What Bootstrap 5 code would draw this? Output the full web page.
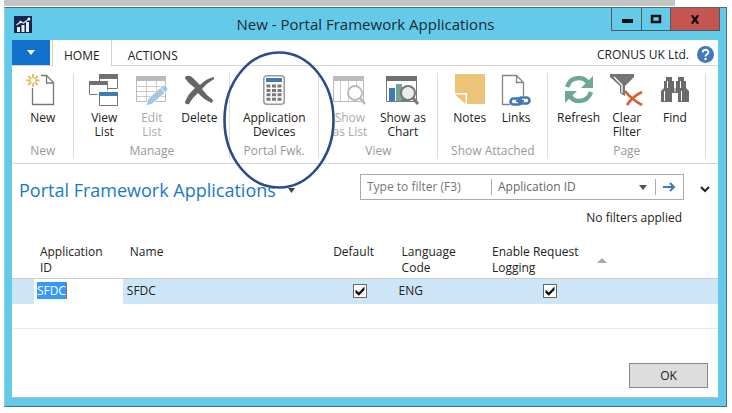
<!DOCTYPE html>
<html lang="en">
<head>
<meta charset="utf-8">
<meta name="viewport" content="width=device-width, initial-scale=1">
<title>New - Portal Framework Applications</title>
<link href="https://cdn.jsdelivr.net/npm/bootstrap@5.3.0/dist/css/bootstrap.min.css" rel="stylesheet">
<style>
body{font-family:"Open Sans","Noto Sans",sans-serif;font-size:12px;line-height:16px;color:#222;background:#fff}
svg{display:block}
.page{min-height:100vh;padding:0 5px 6px 4px}
.backdrop{height:6px;background:#c4c4c4;margin-right:52px}
.window{background:#64caea;border:1px solid #4d6f7d;border-left-color:#8fcfe4;margin-top:1px;padding:0 8px 8px 7px}
.titlebar{height:32px;margin-right:-2px}
.titlebar h1{font-size:15px;line-height:32px;color:#1c2b33;padding-left:88px}
.captions{height:23px;border:1px solid #4d5a60;border-top:0}
.captions button{border:0;border-radius:0;padding:0;width:29px;background:transparent;display:flex;align-items:center;justify-content:center}
.captions button+button{border-left:1px solid #4d5a60}
.captions .close-win{width:49px;background:#c4564f}
.client{background:#fff;border-bottom:1px solid #a9bfc9}
.tabs{height:26px;border-bottom:1px solid #d4d4d4}
.filemenu{width:38px;border:0;border-radius:0;background:#1170c9;padding:0;display:flex;align-items:center;justify-content:center}
.tabs .nav-link{padding:0 12px;line-height:32px;color:#222}
.tabs .nav-link.active{border:solid #d4d4d4;border-width:0 1px;background:#fff;margin:0 4px 0 2px;height:26px;padding:0 11px}
.ribbon{padding:7px 0 5px;border-bottom:1px solid #d4d4d4}
.group{border-right:1px solid #dcdcdc;min-width:0}
.group-name{color:#999;text-align:center;white-space:nowrap;line-height:14px}
.tools{height:71px}
.tool{border:0;border-radius:0;background:none;padding:1px 0 0;font-size:12px;line-height:14px;color:#222;display:flex;flex-direction:column;align-items:center;flex:1 1 0;min-width:0;white-space:nowrap}
.tool svg{margin-bottom:5px;flex-shrink:0}
.tool:disabled{color:#aaa;opacity:1;border:0}
.g-new{flex:62 1 0}.g-manage{flex:156 1 0}.g-portal{flex:89 1 0}
.g-view{flex:119 1 0}.g-show{flex:110 1 0}.g-page{flex:158 1 0}.g-rest{flex:12 1 0}
.g-manage .tools,.g-page .tools{padding:0 6px}
.g-view .tools{padding:0 8px 0 4px}
.g-show .tools{padding:0 8px}
.ring{position:absolute;left:calc(50% - 51px);top:-22px;z-index:3;pointer-events:none}
.subhead{padding:6px 0 0 7px}
.heading{font-size:18px;line-height:24px;color:#1a78cc}
.filter{width:324px;height:26px;border:1px solid #aaa}
.filter input,.filter select{border:0;border-radius:0;background:transparent;color:#666;font-size:12px;line-height:16px;padding:0 6px;appearance:none;outline:0;min-width:0}
.filter input{flex:118 1 0}.filter input::placeholder{color:#777;opacity:1}
.filter .field{flex:155 1 0;border:solid #aaa;border-width:0 1px;height:16px}
.filter .field select{width:100%}
.filter .go{flex:27 1 0;border:0;background:none;padding:0;display:flex;justify-content:center}
.filter-state{padding:10px 2px 0 0;text-align:right}
.plain{border:0;background:none;padding:0}
.expander{padding:0 8px 0 16px}
.grid{table-layout:fixed;width:100%;margin:18px 0 0}
.grid th{font-weight:400;vertical-align:top;padding:0 0 2px 7px;height:34px;border-bottom:1px solid #ccc}
.grid td{height:25px;padding:0 0 0 4px;vertical-align:middle;background:#cde6f7}
.grid tr.blank td{background:#fff;border-bottom:1px solid #e8e8e8}
.grid td.editing{background:#fff;padding-left:3px}
.grid th:nth-child(2){padding-left:6px}
.c0{width:3.1%}.c1{width:12.6%}.c2{width:28.8%}.c3{width:9.7%}.c4{width:12.8%}.c5{width:18.4%}
.picked{background:#3399ff;color:#fff;border-right:1px solid #b06a30}
.grid .form-check-input{width:14px;height:14px;margin:0;border:1px solid #666;border-radius:0;background-color:#fff;display:block;margin:0 auto}
.grid .form-check-input:checked{background-image:url("data:image/svg+xml,%3Csvg xmlns='http://www.w3.org/2000/svg' viewBox='0 0 12 12'%3E%3Cpath d='M1.500 4.500 4.800 7.500 10.500 1.500V5L4.800 10.800 1.500 7.800z' fill='%23111'/%3E%3C/svg%3E");background-size:12px 12px}
.actions{padding:0 10px 9px 0}
.ok{width:79px;height:25px;border:1px solid #888;border-radius:0;background:#ddd;font-size:12px;line-height:16px;padding:0;color:#222}
</style>
<script src="https://cdn.jsdelivr.net/npm/bootstrap@5.3.0/dist/js/bootstrap.bundle.min.js"></script>
</head>
<body>
<div class="page d-flex flex-column">
<div class="backdrop"></div>
<main class="window flex-grow-1 d-flex flex-column">
  <header class="titlebar d-flex align-items-start">
    <svg class="mt-2" width="20" height="17" viewBox="-2 0 20 17"><path fill="#12264f" d="M0 0h18v17H0z"/><path fill="#e8edf4" d="M3 11h3v5H3zM7.500 9h3v7h-3zM12 6h3v10h-3z"/><path d="m2.500 9 4-3 3 1 5.500-4" fill="none" stroke="#dce5f0" stroke-width="1.300"/><circle cx="6.500" cy="6" r="1.200" fill="#fff"/><circle cx="15" cy="3" r="1.400" fill="#fff"/></svg>
    <h1 class="m-0 flex-grow-1 text-center">New - Portal Framework Applications</h1>
    <div class="captions d-flex">
      <button type="button" aria-label="Minimize"><svg width="12" height="12"><path fill="#111" d="M1 6h11v4H1z"/></svg></button>
      <button type="button" aria-label="Maximize"><svg width="12" height="10"><path fill="none" stroke="#111" stroke-width="2.500" d="M2 2h8v6H2z"/></svg></button>
      <button type="button" class="close-win" aria-label="Close"><svg width="10" height="9" viewBox="0 0 12 10"><path fill="#111" d="M1 0h3l2 3 2-3h3L8 5l3 5H8L6 7l-2 3H1l3-5z"/></svg></button>
    </div>
  </header>
  <div class="client flex-grow-1 d-flex flex-column">
    <nav class="tabs d-flex">
      <button type="button" class="filemenu" aria-label="Application menu"><svg width="8" height="5"><path fill="#fff" d="M0 0h8L4 5z"/></svg></button>
      <a class="nav-link active" href="#">HOME</a>
      <a class="nav-link" href="#">ACTIONS</a>
      <div class="ms-auto d-flex align-items-center gap-2 pt-1"><span>CRONUS UK Ltd.</span>
        <button type="button" class="plain pe-1" aria-label="Help"><svg width="17" height="17" viewBox="0 0 17 17"><circle cx="8.500" cy="8.500" r="8.500" fill="#3f79b7"/><path d="M5.700 6.500C5.700 2.900 11.500 3 11.400 6.200 11.300 8.300 8.500 8.200 8.500 10.500" fill="none" stroke="#fff" stroke-width="1.900"/><circle cx="8.500" cy="13" r="1.200" fill="#fff"/></svg></button></div>
    </nav>
    <div class="ribbon d-flex">
      <section class="group g-new">
        <div class="tools d-flex"><button type="button" class="tool"><svg width="34" height="32" viewBox="0 0 34 32"><path d="M6.500 14v16.500h21V8.500l-7-7H15M20.500 2v7h7" fill="none" stroke="#777" stroke-width="1.300"/><g stroke="#e9b95b" stroke-width="1.800"><path d="M7 0v4M7 9v4M.5 6.500h4M9.500 6.500h4M2.300 2l3 3M8.700 8l3 3M11.700 2l-3 3M5.300 8l-3 3"/></g></svg><span>New</span></button></div>
        <div class="group-name">New</div>
      </section>
      <section class="group g-manage">
        <div class="tools d-flex">
          <button type="button" class="tool"><svg width="30" height="32" viewBox="0 0 30 32"><g fill="#fff" stroke="#777"><path d="M10.500.5h18v14h-18z"/><path d="M.5 7.500h18v13H.5z"/><path d="M10.500 18.500h18v13h-18z"/></g><path fill="#707070" d="M10 0h19v5H10zM0 7h19v4H0z"/><path fill="#3f7ab8" d="M10 18h19v4H10z"/><path d="M9 21v-4h10" fill="none" stroke="#fff" stroke-width="1.500"/></svg><span>View<br>List</span></button>
          <button type="button" class="tool" disabled><svg width="32" height="32" viewBox="0 0 32 32"><path fill="#fff" stroke="#bbb" d="M.5 2.500h29v25H.5z"/><path fill="#b9b9b9" d="M0 2h30v5H0z"/><path d="M1 12.500h28M1 17.500h28M1 22.500h28M10.500 7v20M20.500 7v20" stroke="#c9c9c9"/><path d="m10 32 2-7 14-13q3-2 5 1t-1 5L16 30z" fill="#a5c6e2" stroke="#fff" stroke-width=".8"/><path d="m24 13 5 6" stroke="#fff"/></svg><span>Edit<br>List</span></button>
          <button type="button" class="tool"><svg width="31" height="32" viewBox="0 0 31 32"><path fill="#666" d="M1 3Q5 0 9 4l7 7Q23 4 30 3v2Q23 9 18 15q4 6 11 11l-1 3q-8-3-14-10-6 5-9 11-4 1-4-2Q4 20 11 14 3 8 1 4z"/></svg><span>Delete</span></button>
        </div>
        <div class="group-name">Manage</div>
      </section>
      <section class="group g-portal position-relative">
        <div class="tools d-flex"><button type="button" class="tool"><svg width="22" height="32" viewBox="0 0 22 32"><rect x=".8" y="1.800" width="20.400" height="28.400" rx="3" fill="#fff" stroke="#999" stroke-width="1.500"/><path fill="#3f7ab8" d="M3 4h16v4H3z"/><path d="M5.500 10.500v17M11 10.500v17M16.500 10.500v17" stroke="#777" stroke-width="4" stroke-dasharray="3 1.400"/></svg><span>Application<br>Devices</span></button></div>
        <div class="group-name">Portal Fwk.</div>
        <svg class="ring" width="112" height="138" viewBox="0 0 112 138"><ellipse cx="56" cy="69" rx="54.500" ry="67.500" fill="none" stroke="#2b4c8c" stroke-width="2.600"/></svg>
      </section>
      <section class="group g-view">
        <div class="tools d-flex">
          <button type="button" class="tool" disabled><svg width="34" height="32" viewBox="0 0 34 32"><path fill="#fff" stroke="#bbb" d="M.5 2.500h30v25H.5z"/><path fill="#bbb" d="M0 2h31v5H0z"/><path d="M7.500 7v20M15.500 7v20M23.500 7v20" stroke="#ccc"/><circle cx="22" cy="19" r="7" fill="#fff" stroke="#b8b8b8" stroke-width="1.800"/><path d="m27 24 5 6" stroke="#b8b8b8" stroke-width="2.500"/></svg><span>Show<br>as List</span></button>
          <button type="button" class="tool"><svg width="34" height="32" viewBox="0 0 34 32"><path fill="#fff" stroke="#777" d="M.5 2.500h30v25H.5z"/><path fill="#707070" d="M0 2h31v5H0z"/><path fill="#3f7ab8" d="M3 14h6v13H3z"/><path fill="#70a793" d="M10 10h6v17h-6z"/><path fill="#777" d="M16 13h5v14h-5z"/><circle cx="22" cy="19" r="7" fill="#e7eeec" stroke="#777" stroke-width="2"/><path d="m27 24 5 6" stroke="#777" stroke-width="2.800"/></svg><span>Show as<br>Chart</span></button>
        </div>
        <div class="group-name">View</div>
      </section>
      <section class="group g-show">
        <div class="tools d-flex">
          <button type="button" class="tool"><svg width="30" height="32" viewBox="0 0 30 32"><path fill="#ebc477" d="M0 0h30v30H12V19H0zM0 20.500h10.500V30z"/></svg><span>Notes</span></button>
          <button type="button" class="tool"><svg width="30" height="32" viewBox="0 0 30 32"><path d="M9 30.500H1.500V1.500h14l7 7V22M15.500 1.500v7h7" fill="none" stroke="#858585" stroke-width="1.300"/><g fill="none" stroke="#3f79b7" stroke-width="2.600"><rect x="9.500" y="24.500" width="11" height="6" rx="3"/><rect x="17.500" y="23.500" width="11" height="6" rx="3"/></g><path d="M15 27h8" stroke="#3f79b7" stroke-width="2"/></svg><span>Links</span></button>
        </div>
        <div class="group-name">Show Attached</div>
      </section>
      <section class="group g-page">
        <div class="tools d-flex">
          <button type="button" class="tool"><svg width="28" height="32" viewBox="0 0 28 32"><g id="arc"><path d="M2 13Q5 4 14 4q6 0 9 5" fill="none" stroke="#70a793" stroke-width="4.500"/><path fill="#70a793" d="M28 2v12H16z"/></g><use href="#arc" transform="rotate(180 14 15.500)"/></svg><span>Refresh</span></button>
          <button type="button" class="tool"><svg width="34" height="32" viewBox="0 0 34 32"><path fill="#747474" d="M0 0h24v3l-9 9v10l-5-3v-7L0 3z"/><path d="m4 3 8 8v8" fill="none" stroke="#fff" stroke-width="1.300"/><path d="M15 17q6 8 17 14M32 18q-9 4-15 13" fill="none" stroke="#d95f3c" stroke-width="2.800"/></svg><span>Clear<br>Filter</span></button>
          <button type="button" class="tool"><svg width="28" height="32" viewBox="0 0 28 32"><path fill="#6b6b6b" d="M5 3h6v4h2v7h2V7h2V3h6v4h2v7l3 3v11H17v-9h-6v9H0V17l3-3V7h2z"/><path d="M6.500 7v7M19.500 7v7M3.500 17v10M20.500 17v10M14 8v10" stroke="#fff" stroke-width="1"/></svg><span>Find</span></button>
        </div>
        <div class="group-name">Page</div>
      </section>
      <div class="g-rest"></div>
    </div>
    <div class="subhead d-flex align-items-start">
      <div class="d-flex align-items-center mt-2"><h2 class="heading m-0">Portal Framework Applications</h2><button type="button" class="plain ms-2 ps-1" aria-label="Choose page"><svg width="7" height="5"><path fill="#444" d="M0 0h7L3.500 5z"/></svg></button></div>
      <div class="ms-auto pt-1">
        <form class="filter d-flex align-items-center">
          <input type="text" aria-label="Type to filter" placeholder="Type to filter (F3)">
          <div class="field d-flex align-items-center pe-2"><select aria-label="Filter field"><option>Application ID</option></select><svg width="8" height="5"><path fill="#555" d="M0 0h8L4 5z"/></svg></div>
          <button type="button" class="go" aria-label="Apply filter"><svg width="13" height="10" viewBox="0 0 13 10"><path d="M0 5h11M7 1l4 4-4 4" fill="none" stroke="#3f7ab8" stroke-width="2"/></svg></button>
        </form>
        <div class="filter-state">No filters applied</div>
      </div>
      <button type="button" class="plain expander mt-3" aria-label="Expand filters"><svg width="10" height="7"><path d="m1 1 4 4 4-4" fill="none" stroke="#222" stroke-width="2"/></svg></button>
    </div>
    <table class="grid">
      <colgroup><col class="c0"><col class="c1"><col class="c2"><col class="c3"><col class="c4"><col class="c5"><col></colgroup>
      <thead><tr><th></th><th scope="col">Application<br>ID</th><th scope="col">Name</th><th scope="col">Default</th><th scope="col">Language<br>Code</th>
        <th scope="col"><div class="d-flex justify-content-between align-items-center pe-2">Enable Request<br>Logging<svg width="10" height="5"><path fill="#aaa" d="M0 5h10L5 0z"/></svg></div></th><th></th></tr></thead>
      <tbody>
        <tr><td></td><td class="editing"><span class="picked">SFDC</span></td><td>SFDC</td><td class="p-0"><input class="form-check-input" type="checkbox" aria-label="Default" checked></td><td>ENG</td><td class="p-0"><input class="form-check-input" type="checkbox" aria-label="Enable Request Logging" checked></td><td></td></tr>
        <tr class="blank"><td colspan="7"></td></tr>
      </tbody>
    </table>
    <div class="actions d-flex justify-content-end mt-auto"><button type="button" class="ok">OK</button></div>
  </div>
</main>
</div>
</body>
</html>
